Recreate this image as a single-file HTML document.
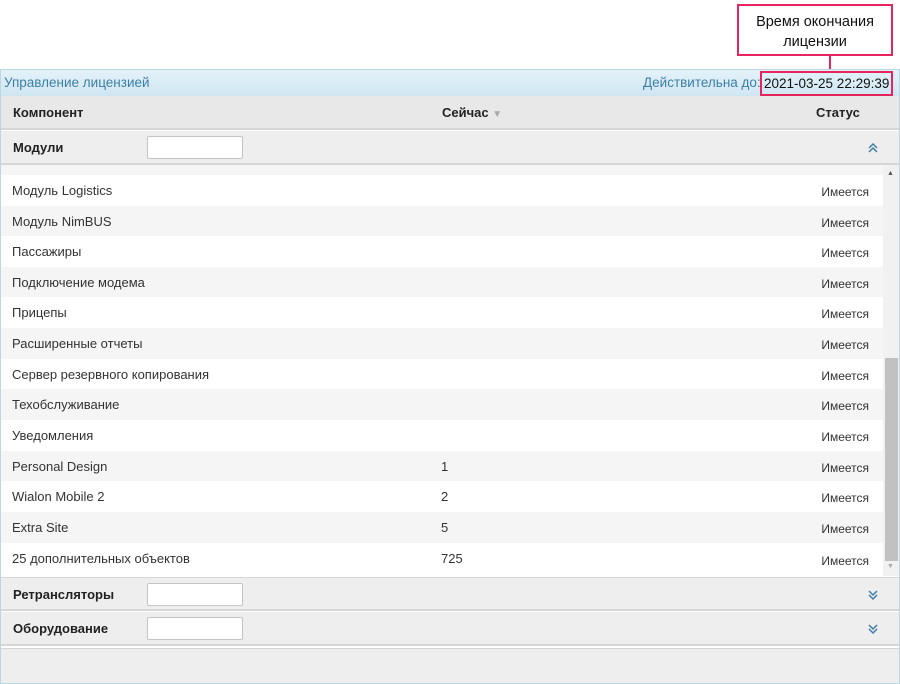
<!DOCTYPE html>
<html><head><meta charset="utf-8"><style>
*{box-sizing:border-box;margin:0;padding:0}
body{width:900px;height:684px;background:#fff;font-family:"Liberation Sans",Arial,sans-serif;position:relative;overflow:hidden;font-size:13px;color:#333}
.abs{position:absolute}
.panel{left:0;top:69px;width:900px;height:615px;border:1px solid #b8d8e4;background:#fff}
.hdr{left:1px;top:70px;width:898px;height:26px;background:linear-gradient(#e4f2f9,#cfe6f2);color:#3d7fa6;font-size:13.5px}
.colh{left:1px;top:96px;width:898px;height:34px;background:#e8e8e8;border-bottom:2px solid #d6d6d6;font-weight:bold;font-size:13px;color:#222}
.grp{left:1px;width:898px;height:34px;background:#eeeeee;border-bottom:2px solid #d6d6d6;font-weight:bold;color:#222}
.inp{position:absolute;left:146px;top:5px;width:96px;height:23px;background:#fff;border:1px solid #c4c4c4;border-radius:2px}
.row{left:1px;width:882px;height:31px}
.row span{position:absolute;top:8px}
.st{right:14px;font-size:12px;top:10px!important}
.box{border:2px solid #e8245e}
.chev{position:absolute;left:866px;top:11px}
</style></head><body>
<div class="abs box" style="left:737px;top:4px;width:156px;height:52px;text-align:center;font-size:14.5px;line-height:20px;padding-top:6px;color:#111">Время окончания<br>лицензии</div>
<div class="abs" style="left:829px;top:55px;width:2px;height:15px;background:#e8245e"></div>
<div class="abs panel"></div>
<div class="abs hdr"><span class="abs" style="left:3px;top:5px">Управление лицензией</span><span class="abs" style="left:642px;top:5px">Действительна до:</span></div>
<div class="abs box" style="left:760px;top:71px;width:133px;height:25px;font-size:13.5px;padding:3px 0 0 2px;color:#111">2021-03-25 22:29:39</div>
<div class="abs colh"><span class="abs" style="left:12px;top:9px">Компонент</span><span class="abs" style="left:441px;top:9px">Сейчас <span style="color:#aaa;font-size:10px">▼</span></span><span class="abs" style="left:815px;top:9px">Статус</span></div>
<div class="abs grp" style="top:131px"><span class="abs" style="left:12px;top:9px">Модули</span><div class="inp"></div><svg class="chev" width="12" height="12" viewBox="0 0 12 12"><path d="M2 6 6 2 10 6M2 10 6 6 10 10" fill="none" stroke="#3d7fa6" stroke-width="1.5"/></svg></div>
<div class="abs" style="left:1px;top:165px;width:882px;height:13px;background:#f5f5f5"></div>
<div class="abs" style="left:883px;top:165px;width:16px;height:411px;background:#f1f1f1"></div>
<div class="abs" style="left:885px;top:358px;width:13px;height:203px;background:#c1c1c1"></div>
<div class="abs" style="left:887px;top:170px;font-size:7px;color:#555">▲</div>
<div class="abs" style="left:887px;top:563px;font-size:7px;color:#aaa">▼</div>
<div class="abs row" style="top:175px;background:#fff"><span style="left:11px">Модуль Logistics</span><span class="st">Имеется</span></div>
<div class="abs row" style="top:206px;background:#f5f5f5"><span style="left:11px">Модуль NimBUS</span><span class="st">Имеется</span></div>
<div class="abs row" style="top:236px;background:#fff"><span style="left:11px">Пассажиры</span><span class="st">Имеется</span></div>
<div class="abs row" style="top:267px;background:#f5f5f5"><span style="left:11px">Подключение модема</span><span class="st">Имеется</span></div>
<div class="abs row" style="top:297px;background:#fff"><span style="left:11px">Прицепы</span><span class="st">Имеется</span></div>
<div class="abs row" style="top:328px;background:#f5f5f5"><span style="left:11px">Расширенные отчеты</span><span class="st">Имеется</span></div>
<div class="abs row" style="top:359px;background:#fff"><span style="left:11px">Сервер резервного копирования</span><span class="st">Имеется</span></div>
<div class="abs row" style="top:389px;background:#f5f5f5"><span style="left:11px">Техобслуживание</span><span class="st">Имеется</span></div>
<div class="abs row" style="top:420px;background:#fff"><span style="left:11px">Уведомления</span><span class="st">Имеется</span></div>
<div class="abs row" style="top:451px;background:#f5f5f5"><span style="left:11px">Personal Design</span><span style="left:440px">1</span><span class="st">Имеется</span></div>
<div class="abs row" style="top:481px;background:#fff"><span style="left:11px">Wialon Mobile 2</span><span style="left:440px">2</span><span class="st">Имеется</span></div>
<div class="abs row" style="top:512px;background:#f5f5f5"><span style="left:11px">Extra Site</span><span style="left:440px">5</span><span class="st">Имеется</span></div>
<div class="abs row" style="top:543px;background:#fff;height:33px"><span style="left:11px">25 дополнительных объектов</span><span style="left:440px">725</span><span class="st" style="top:11px!important">Имеется</span></div>
<div class="abs grp" style="top:577px;border-top:1px solid #d6d6d6"><span class="abs" style="left:12px;top:9px">Ретрансляторы</span><div class="inp"></div><svg class="chev" width="12" height="12" viewBox="0 0 12 12"><path d="M2 2 6 6 10 2M2 6 6 10 10 6" fill="none" stroke="#3d7fa6" stroke-width="1.5"/></svg></div>
<div class="abs grp" style="top:612px"><span class="abs" style="left:12px;top:9px">Оборудование</span><div class="inp"></div><svg class="chev" width="12" height="12" viewBox="0 0 12 12"><path d="M2 2 6 6 10 2M2 6 6 10 10 6" fill="none" stroke="#3d7fa6" stroke-width="1.5"/></svg></div>
<div class="abs" style="left:1px;top:648px;width:898px;height:35px;background:#eeeeee;border-top:1px solid #d6d6d6"></div>
</body></html>
